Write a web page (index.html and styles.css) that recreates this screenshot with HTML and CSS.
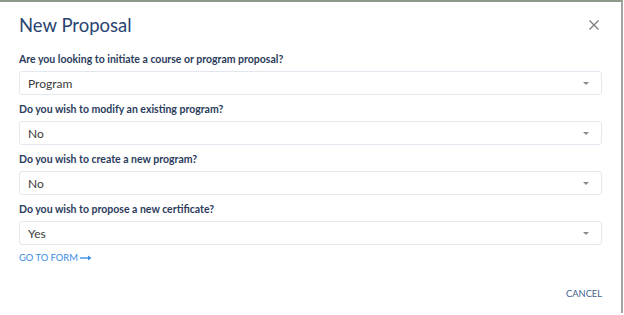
FILE: index.html
```html
<!DOCTYPE html>
<html lang="en">
<head>
  <meta charset="UTF-8">
  <title>New Proposal</title>
  <link rel="stylesheet" href="styles.css">
</head>
<body>
  <div class="dialog">
    <div class="dialog-header">
      <h2 class="dialog-title">New Proposal</h2>
      <button class="close-btn" aria-label="Close">
        <svg width="10" height="10" viewBox="0 0 10 10"><path d="M0.5 0.5L9.5 9.5M9.5 0.5L0.5 9.5" stroke="#7a7a7a" stroke-width="1.3" fill="none"/></svg>
      </button>
    </div>

    <form class="dialog-form">
      <div class="field">
        <label for="q1">Are you looking to initiate a course or program proposal?</label>
        <div class="select-wrap">
          <select id="q1">
            <option>Course</option>
            <option selected>Program</option>
          </select>
        </div>
      </div>

      <div class="field">
        <label for="q2">Do you wish to modify an existing program?</label>
        <div class="select-wrap">
          <select id="q2">
            <option>Yes</option>
            <option selected>No</option>
          </select>
        </div>
      </div>

      <div class="field">
        <label for="q3">Do you wish to create a new program?</label>
        <div class="select-wrap">
          <select id="q3">
            <option>Yes</option>
            <option selected>No</option>
          </select>
        </div>
      </div>

      <div class="field">
        <label for="q4">Do you wish to propose a new certificate?</label>
        <div class="select-wrap">
          <select id="q4">
            <option selected>Yes</option>
            <option>No</option>
          </select>
        </div>
      </div>

      <a class="go-link" href="#">GO TO FORM
        <svg width="12" height="6" viewBox="0 0 12 6"><path d="M0 3H10" stroke="#3b8ee8" stroke-width="1.4"/><path d="M8 0.5L11.5 3L8 5.5Z" fill="#3b8ee8"/></svg>
      </a>
    </form>

    <div class="dialog-actions">
      <button class="text-btn">CANCEL</button>
    </div>
  </div>
</body>
</html>
```

FILE: styles.css
```css
html, body { margin: 0; padding: 0; background: #fff; }
body { font-family: Lato, "Open Sans", sans-serif; }

.dialog { width: 623px; height: 313px; box-sizing: border-box; border-top: 2px solid #8d9a8a; border-right: 2px solid #a3a3a3; background: #fff; padding: 0 19px; }

.dialog-header { display: flex; justify-content: space-between; align-items: center; padding-top: 11px; height: 24px; }
.dialog-title { margin: 0; font-size: 18.5px; line-height: 24px; font-weight: 400; color: #2a4470; }
.close-btn { background: none; border: 0; padding: 0; margin-right: 3px; width: 10px; height: 10px; cursor: pointer; display: flex; }

.dialog-form { margin-top: 15px; }
.field { margin-bottom: 7px; }
.field label { display: block; font-size: 10.5px; line-height: 14px; font-weight: 700; color: #2b3c5c; margin-bottom: 5px; }

.select-wrap { position: relative; }
.select-wrap::after { content: ""; position: absolute; right: 13px; top: 11px; border-left: 3px solid transparent; border-right: 3px solid transparent; border-top: 3px solid #8a8a8a; pointer-events: none; }
.select-wrap select { appearance: none; -webkit-appearance: none; width: 100%; height: 24px; box-sizing: border-box; border: 1px solid #e3e8ef; border-radius: 3px; background: #fff; padding: 0 8px; font-family: Lato, sans-serif; font-size: 12px; color: #3a3a3a; outline: none; }

.go-link { display: flex; width: fit-content; align-items: center; gap: 2px; font-size: 9.4px; line-height: 12px; color: #3b8ee8; text-decoration: none; }

.dialog-actions { display: flex; justify-content: flex-end; margin-top: 24px; }
.text-btn { background: none; border: 0; padding: 0; font-family: Lato, sans-serif; font-size: 9.3px; line-height: 12px; color: #47628f; cursor: pointer; }
```
